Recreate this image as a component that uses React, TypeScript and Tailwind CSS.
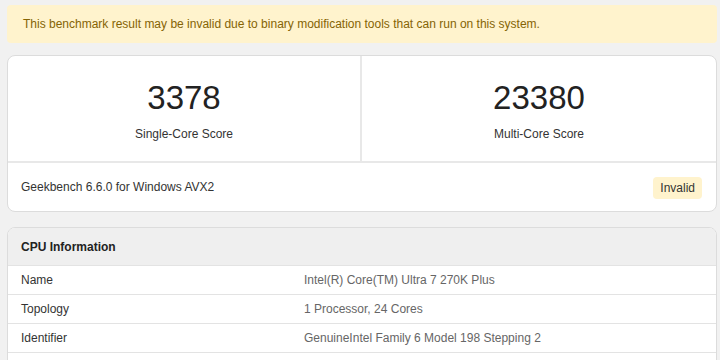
export default function App() {
  const scores = [
    { value: "3378", label: "Single-Core Score" },
    { value: "23380", label: "Multi-Core Score" },
  ];
  const cpuRows = [
    { name: "Name", value: "Intel(R) Core(TM) Ultra 7 270K Plus" },
    { name: "Topology", value: "1 Processor, 24 Cores" },
    { name: "Identifier", value: "GenuineIntel Family 6 Model 198 Stepping 2" },
  ];

  return (
    <div className="h-[360px] overflow-hidden bg-[#f1f1f1] pl-[7px] pr-[3px] pt-[5px] font-['Liberation_Sans',Arial,sans-serif] text-[12px] text-[#333]">
      <div className="flex h-[38px] items-center rounded-[4px] bg-[#fff3cd] px-4 text-[#856404]">
        This benchmark result may be invalid due to binary modification tools that can run on this system.
      </div>

      <div className="mt-3 overflow-hidden rounded-[8px] border border-[#dcdcdc] bg-white">
        <div className="grid h-[107px] grid-cols-2 border-b-2 border-[#e8e8e8]">
          {scores.map((score, i) => (
            <div
              key={score.label}
              className={`flex flex-col items-center pt-[22px] ${i === 0 ? "border-r-2 border-[#e8e8e8]" : ""}`}
            >
              <div className="text-[33px] leading-[40px] text-[#222]">{score.value}</div>
              <div className="mt-[9px] leading-[15px]">{score.label}</div>
            </div>
          ))}
        </div>
        <div className="flex h-[48px] items-center justify-between pl-[13px] pr-[14px]">
          <span>Geekbench 6.6.0 for Windows AVX2</span>
          <span className="mt-[2px] flex h-[22px] items-center rounded-[4px] bg-[#fff3cd] px-[7px]">Invalid</span>
        </div>
      </div>

      <div className="mt-[15px] overflow-hidden rounded-[8px] border border-[#dcdcdc] bg-white">
        <div className="flex h-[37px] items-center bg-[#efefef] px-[13px] font-bold text-[#222]">
          CPU Information
        </div>
        {cpuRows.map((row) => (
          <div key={row.name} className="grid h-[29px] grid-cols-[283px_1fr] items-center border-t border-[#e3e3e3] px-[13px]">
            <span>{row.name}</span>
            <span className="text-[#666]">{row.value}</span>
          </div>
        ))}
        <div className="h-[29px] border-t border-[#e3e3e3]" />
      </div>
    </div>
  );
}
